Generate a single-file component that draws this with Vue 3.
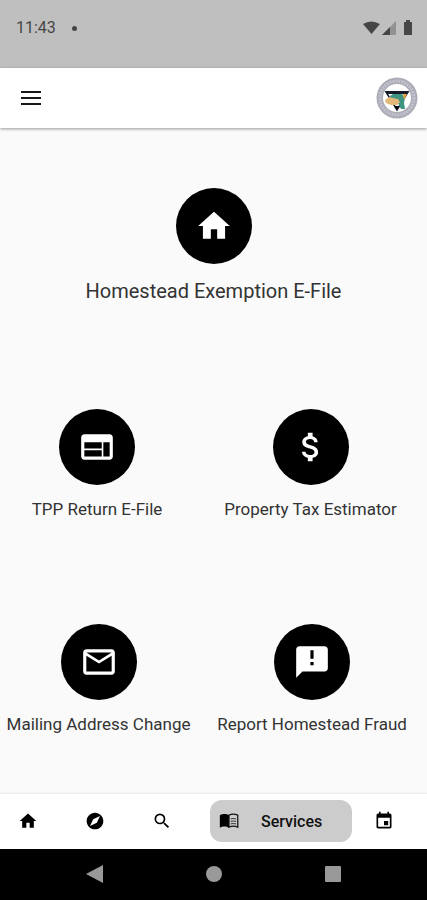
<script setup>
const rows = [
  [{ label: 'Homestead Exemption E-File', icon: 'home' }],
  [
    { label: 'TPP Return E-File', icon: 'web' },
    { label: 'Property Tax Estimator', icon: 'dollar' },
  ],
  [
    { label: 'Mailing Address Change', icon: 'mail' },
    { label: 'Report Homestead Fraud', icon: 'report' },
  ],
]

const icons = {
  home: 'M10 20v-6h4v6h5v-8h3L12 3 2 12h3v8z',
  web: 'M20 4H4c-1.100 0-1.990.9-1.990 2L2 18c0 1.100.9 2 2 2h16c1.100 0 2-.9 2-2V6c0-1.100-.9-2-2-2zm-5 14H4v-4h11v4zm0-5H4V9h11v4zm5 5h-4V9h4v9z',
  dollar: 'M11.800 10.900c-2.270-.59-3-1.200-3-2.150 0-1.090 1.010-1.850 2.700-1.850 1.780 0 2.440.85 2.500 2.100h2.210c-.07-1.720-1.120-3.300-3.210-3.810V3h-3v2.160c-1.940.42-3.500 1.680-3.500 3.610 0 2.310 1.910 3.460 4.700 4.130 2.500.6 3 1.480 3 2.410 0 .69-.49 1.790-2.700 1.790-2.060 0-2.870-.92-2.980-2.100h-2.200c.12 2.190 1.760 3.420 3.680 3.830V21h3v-2.150c1.950-.37 3.500-1.500 3.500-3.550 0-2.840-2.430-3.810-4.700-4.400z',
  mail: 'M22 6c0-1.100-.9-2-2-2H4c-1.100 0-2 .9-2 2v12c0 1.100.9 2 2 2h16c1.100 0 2-.9 2-2V6zm-2 0l-8 5-8-5h16zm0 12H4V8l8 5 8-5v10z',
  report: 'M20 2H4c-1.100 0-1.990.9-1.990 2L2 22l4-4h14c1.100 0 2-.9 2-2V4c0-1.100-.9-2-2-2zm-7 12h-2v-2h2v2zm0-4h-2V4.500h2V10z',
  compass: 'M12 2C6.500 2 2 6.500 2 12s4.500 10 10 10 10-4.500 10-10S17.500 2 12 2zm2.190 12.190L6 18l3.810-8.190L18 6l-3.810 8.190z',
  search: 'M15.500 14h-.79l-.28-.27A6.471 6.471 0 0 0 16 9.500 6.500 6.500 0 1 0 9.500 16c1.610 0 3.090-.59 4.230-1.570l.27.28v.79l5 4.990L20.490 19l-4.990-5zm-6 0C7.010 14 5 11.990 5 9.500S7.010 5 9.500 5 14 7.010 14 9.500 11.990 14 9.500 14z',
  event: 'M17 12h-5v5h5v-5zM16 1v2H8V1H6v2H5c-1.110 0-1.990.9-1.990 2L3 19c0 1.100.89 2 2 2h14c1.100 0 2-.9 2-2V5c0-1.100-.9-2-2-2h-1V1h-2zm3 18H5V8h14v11z',
}
</script>

<template>
  <div class="screen">
    <div class="status">
      <span class="clock">11:43</span>
      <span class="dot"></span>
      <svg class="signals" viewBox="0 0 50 16" aria-hidden="true">
        <path d="M0 4Q8-1 17 4L8.500 14Z" fill="#464646" />
        <path d="M33 1V15H19Z" fill="#929292" />
        <path d="M27 7V15H19Z" fill="#464646" />
        <path d="M41 2h2V0h4v2h2v13h-8V2Z" fill="#464646" />
      </svg>
    </div>

    <header class="bar">
      <button class="menu" type="button" aria-label="Menu">
        <svg viewBox="0 0 20 14"><path d="M0 1h20M0 7h20M0 13h20" stroke="#171717" stroke-width="2" /></svg>
      </button>
      <svg class="seal" viewBox="0 0 42 42" role="img" aria-label="County seal">
        <circle cx="21" cy="21" r="20.500" fill="#acacb8" />
        <circle cx="21" cy="21" r="17" fill="none" stroke="#c2c2cc" stroke-width="3" stroke-dasharray="2 1" />
        <circle cx="21" cy="21" r="14" fill="#fff" />
        <path d="M10 15H32L21 33Z" fill="#fff" stroke="#171b2c" stroke-width="1.500" />
        <path d="M9 14h24l-1.500 3H10.500Z" fill="#171b2c" />
        <path d="M14 19l3-2 9 0 3 4-1 5 1 6-4 0-3-6-7-2Z" fill="#3d9582" />
        <path d="M9 23l4-3 4 1 5 1 2 3-3 3-6 0-5-2Z" fill="#e2b778" />
        <path d="M27 17l4 0-3 6Z" fill="#e4a23b" />
        <path d="M18 29h5l-2 4Z" fill="#0a0a0e" />
      </svg>
    </header>

    <main class="services">
      <div v-for="(row, i) in rows" :key="i" class="row" :class="{ lead: row.length === 1 }">
        <a v-for="item in row" :key="item.label" class="tile" href="#">
          <span class="disc">
            <svg viewBox="0 0 24 24" fill="currentColor" aria-hidden="true"><path :d="icons[item.icon]" /></svg>
          </span>
          <span class="label">{{ item.label }}</span>
        </a>
      </div>
    </main>

    <nav class="tabs">
      <a class="tab" href="#" aria-label="Home"><svg viewBox="0 0 24 24"><path :d="icons.home" /></svg></a>
      <a class="tab" href="#" aria-label="Explore"><svg viewBox="0 0 24 24"><path :d="icons.compass" /></svg></a>
      <a class="tab" href="#" aria-label="Search"><svg viewBox="0 0 24 24"><path :d="icons.search" /></svg></a>
      <a class="tab active" href="#" aria-current="page">
        <svg viewBox="0 0 24 24">
          <path d="M1 5c3-2 8-2 11 0v15c-3-2-8-2-11 0Z" />
          <path d="M12 5c3-1.500 7-1.500 10.500 0v14.500c-3.500-1.500-7.500-1.500-10.500 0Z" fill="none" stroke="#111" stroke-width="1.500" />
          <path d="M14 9.500q3-1 6.500 0M14 12.500q3-1 6.500 0M14 15.500q3-1 6.500 0" fill="none" stroke="#333" stroke-width="1.200" />
        </svg>
        <span>Services</span>
      </a>
      <a class="tab" href="#" aria-label="Events"><svg viewBox="0 0 24 24"><path :d="icons.event" /></svg></a>
    </nav>

    <div class="system">
      <button type="button" aria-label="Back"><svg viewBox="0 0 20 20"><path d="M1 10L18 1V19Z" /></svg></button>
      <button type="button" aria-label="Home screen"><svg viewBox="0 0 20 20"><circle cx="10" cy="10" r="8" /></svg></button>
      <button type="button" aria-label="Recent apps"><svg viewBox="0 0 20 20"><rect x="2" y="2" width="16" height="16" rx="1" /></svg></button>
    </div>
  </div>
</template>

<style>
body {
  margin: 0;
}
</style>

<style scoped>
.screen {
  min-height: 100vh;
  display: flex;
  flex-direction: column;
  background: #fafafa;
  color: #333;
  font-family: Roboto, "Liberation Sans", sans-serif;
}
.screen * {
  box-sizing: border-box;
}
svg {
  display: block;
}
a {
  color: inherit;
  text-decoration: none;
}
button {
  border: 0;
  padding: 0;
  background: none;
}
.status {
  display: flex;
  align-items: center;
  padding: 18px 14px 30px 16px;
  background: #bfbfbf;
  color: #464646;
}
.clock {
  font-size: 16px;
  line-height: 20px;
}
.dot {
  width: 5px;
  height: 5px;
  margin-left: 16px;
  border-radius: 50%;
  background: #464646;
}
.signals {
  width: 50px;
  height: 16px;
  margin-left: auto;
}
.bar {
  display: flex;
  align-items: center;
  justify-content: space-between;
  padding: 9px 9px 9px 21px;
  background: #fff;
  box-shadow: 0 1px 3px rgba(0, 0, 0, 0.4);
}
.menu svg {
  width: 20px;
  height: 14px;
}
.seal {
  width: 42px;
  height: 42px;
}
.services {
  flex: 1;
  display: flex;
  flex-direction: column;
  gap: 103px;
  padding: 60px 0 24px;
}
.row {
  display: grid;
  grid-template-columns: 5fr 6fr;
}
.row:last-child {
  grid-template-columns: 6fr 7fr;
}
.row.lead {
  grid-template-columns: 1fr;
}
.tile {
  display: flex;
  flex-direction: column;
  align-items: center;
  gap: 12px;
}
.disc {
  display: grid;
  place-items: center;
  width: 76px;
  height: 76px;
  border-radius: 50%;
  background: #000;
  color: #fff;
}
.disc svg {
  width: 38px;
  height: 38px;
}
.label {
  font-size: 17px;
  line-height: 24px;
  white-space: nowrap;
}
.lead .label {
  font-size: 20px;
  line-height: 30px;
}
.tabs {
  display: grid;
  grid-template-columns: 67fr 67fr 58fr 164fr 20fr;
  align-items: center;
  justify-items: start;
  padding: 6px 33px 7px 18px;
  background: #fff;
  box-shadow: 0 -1px 2px rgba(0, 0, 0, 0.08);
}
.tab svg {
  width: 20px;
  height: 20px;
  fill: #000;
}
.tab.active {
  display: flex;
  align-items: center;
  gap: 22px;
  height: 42px;
  padding: 0 30px 0 9px;
  border-radius: 12px;
  background: #ccc;
  color: #111;
  font-size: 16px;
  font-weight: 500;
}
.system {
  display: flex;
  align-items: center;
  justify-content: space-around;
  padding: 15px 35px 16px 36px;
  background: #000;
}
.system svg {
  width: 20px;
  height: 20px;
  fill: #999;
}
</style>
